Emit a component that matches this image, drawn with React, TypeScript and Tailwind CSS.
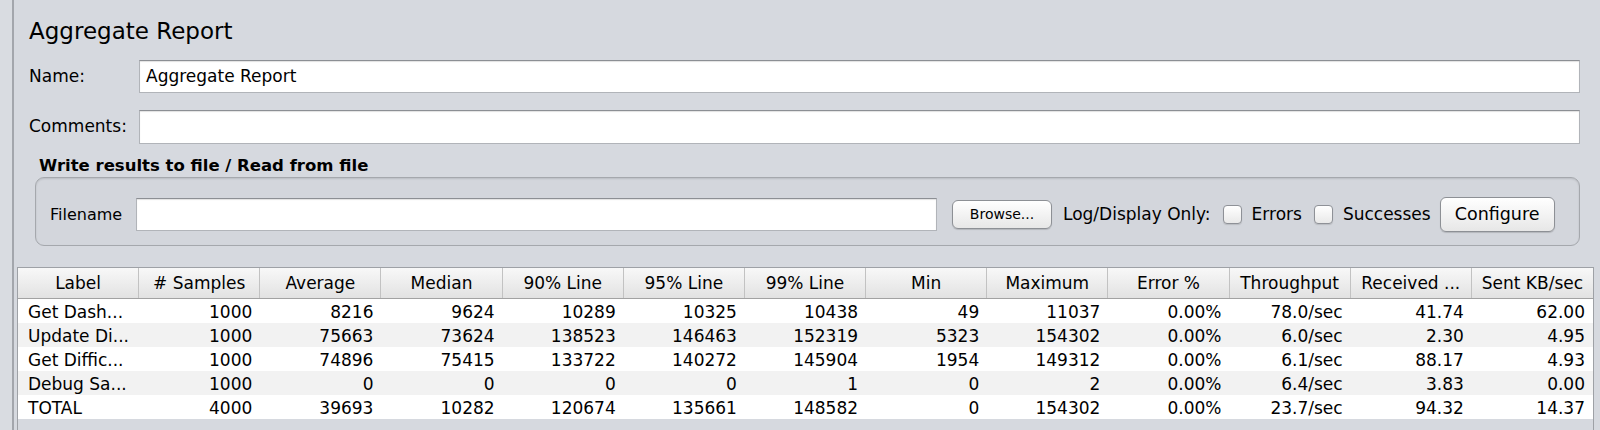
import React from "react";

const COLUMNS = [
  "Label", "# Samples", "Average", "Median", "90% Line", "95% Line", "99% Line",
  "Min", "Maximum", "Error %", "Throughput", "Received ...", "Sent KB/sec",
];

const ROWS: string[][] = [
  ["Get Dash...", "1000", "8216", "9624", "10289", "10325", "10438", "49", "11037", "0.00%", "78.0/sec", "41.74", "62.00"],
  ["Update Di...", "1000", "75663", "73624", "138523", "146463", "152319", "5323", "154302", "0.00%", "6.0/sec", "2.30", "4.95"],
  ["Get Diffic...", "1000", "74896", "75415", "133722", "140272", "145904", "1954", "149312", "0.00%", "6.1/sec", "88.17", "4.93"],
  ["Debug Sa...", "1000", "0", "0", "0", "0", "1", "0", "2", "0.00%", "6.4/sec", "3.83", "0.00"],
  ["TOTAL", "4000", "39693", "10282", "120674", "135661", "148582", "0", "154302", "0.00%", "23.7/sec", "94.32", "14.37"],
];

function TextField({ value, className = "" }: { value?: string; className?: string }) {
  return (
    <div
      className={
        "flex items-center bg-white border border-[#b1b4b9] border-t-[#8c8f94] shadow-[inset_0_1px_1px_rgba(0,0,0,0.12)] px-[6px] text-[17px] " +
        className
      }
    >
      {value}
    </div>
  );
}

function AquaButton({ label, className = "" }: { label: string; className?: string }) {
  return (
    <div
      className={
        "flex items-center justify-center rounded-[6px] border border-[#8d9095] bg-gradient-to-b from-[#ffffff] to-[#e7e7e7] shadow-[0_1px_1px_rgba(0,0,0,0.15)] shrink-0 " +
        className
      }
    >
      {label}
    </div>
  );
}

function CheckBox({ className = "" }: { className?: string }) {
  return (
    <div
      className={
        "w-[19px] h-[19px] shrink-0 rounded-[4px] border border-[#8e9197] bg-gradient-to-b from-[#ffffff] to-[#e9e9e9] shadow-[0_1px_1px_rgba(0,0,0,0.12)] " +
        className
      }
    />
  );
}

export default function App() {
  return (
    <div className="flex h-[430px] w-[1600px] overflow-hidden bg-[#d6d9df] text-black font-['DejaVu_Sans','Liberation_Sans',sans-serif]">
      {/* left tree divider */}
      <div className="w-[12px] shrink-0 bg-[#d9dce1]" />
      <div className="w-[2px] shrink-0 bg-[#a3a6ac]" />

      <div className="flex-1 flex flex-col min-w-0 pl-[3px] pr-[6px]">
        {/* ── Form ─────────────────────────────────────────── */}
        <div className="pl-[12px] pr-[14px]">
          <div className="pt-[20px] text-[23px] leading-[23px]">Aggregate Report</div>

          <div className="mt-[17px] flex items-center h-[33px]">
            <span className="w-[110px] shrink-0 text-[17px]">Name:</span>
            <TextField value="Aggregate Report" className="flex-1 h-full" />
          </div>

          <div className="mt-[17px] flex items-center h-[34px]">
            <span className="w-[110px] shrink-0 text-[17px]">Comments:</span>
            <TextField className="flex-1 h-full" />
          </div>

          <div className="mt-[14px] pl-[10px] text-[16.5px] leading-[16px] font-bold">
            Write results to file / Read from file
          </div>

          <div className="mt-[3px] ml-[6px] h-[69px] flex items-center pt-[6px] pl-[14px] rounded-[9px] border border-[#a5a8ad] bg-[#d3d6dc] shadow-[inset_0_1px_2px_rgba(0,0,0,0.12)]">
            <span className="w-[86px] shrink-0 text-[16px]">Filename</span>
            <TextField className="w-[801px] h-[33px] shrink-0" />
            <AquaButton label="Browse..." className="ml-[15px] w-[100px] h-[29px] text-[14px]" />
            <span className="ml-[11px] text-[17px] whitespace-nowrap">Log/Display Only:</span>
            <CheckBox className="ml-[12px]" />
            <span className="ml-[10px] text-[17px]">Errors</span>
            <CheckBox className="ml-[12px]" />
            <span className="ml-[10px] text-[17px]">Successes</span>
            <AquaButton label="Configure" className="ml-[9px] w-[115px] h-[35px] text-[17.5px]" />
          </div>
        </div>

        {/* ── Results table ────────────────────────────────── */}
        <div className="mt-[21px] flex-1 border-x border-t border-[#9ea1a6] text-[17px]">
          <div className="grid grid-cols-[repeat(13,minmax(0,1fr))] h-[31px] border-b border-[#a2a2a2]">
            {COLUMNS.map((c, i) => (
              <div
                key={c}
                className={
                  "flex items-center justify-center pt-[1px] whitespace-nowrap overflow-hidden bg-gradient-to-b from-[#f8f8f8] to-[#e2e2e2] " +
                  (i < COLUMNS.length - 1 ? "border-r border-[#c2c2c2]" : "")
                }
              >
                {c}
              </div>
            ))}
          </div>
          {ROWS.map((row, r) => (
            <div
              key={r}
              className={
                "grid grid-cols-[repeat(13,minmax(0,1fr))] h-[24px] " +
                (r % 2 === 1 ? "bg-[#f2f2f2]" : "bg-white")
              }
            >
              {row.map((cell, i) => (
                <div
                  key={i}
                  className={
                    "h-[24px] pt-[2px] leading-[22px] whitespace-nowrap overflow-hidden " +
                    (i === 0 ? "pl-[10px] text-left" : "pr-[8px] text-right")
                  }
                >
                  {cell}
                </div>
              ))}
            </div>
          ))}
        </div>
      </div>
    </div>
  );
}
